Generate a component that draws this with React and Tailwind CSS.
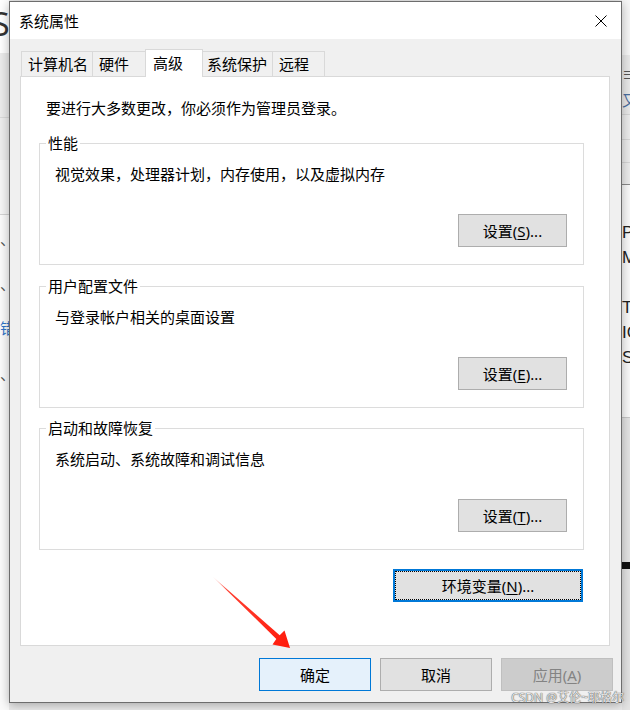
import React from 'react';

const tabs = [
  { label: '计算机名', cls: 'w-[72px] pl-[6px]' },
  { label: '硬件', cls: 'w-[54px] pl-[6px] -ml-px' },
  { label: '高级', active: true, cls: 'w-[58px] pl-[7px] -ml-px' },
  { label: '系统保护', cls: 'w-[71px] pl-[4px] -ml-px' },
  { label: '远程', cls: 'w-[53px] pl-[6px] -ml-px' },
];

const groups = [
  { title: '性能', text: '视觉效果，处理器计划，内存使用，以及虚拟内存', key: 'S', gap: 'mt-[15px]' },
  { title: '用户配置文件', text: '与登录帐户相关的桌面设置', key: 'E', gap: 'mt-[11px]' },
  { title: '启动和故障恢复', text: '系统启动、系统故障和调试信息', key: 'T', gap: 'mt-[10px]' },
];

function SettingsButton({ hotkey }) {
  return (
    <button className="self-end w-[109px] h-[33px] border border-[#adadad] bg-[#e1e1e1] text-[15px] leading-[20px] text-black">
      设置(<span className="underline underline-offset-2">{hotkey}</span>)...
    </button>
  );
}

function Group({ title, text, hotkey, gap }) {
  return (
    <fieldset className={`w-[545px] border border-[#dcdcdc] ${gap}`}>
      <legend className="ml-[6px] px-[2px] leading-[20px] text-[15px]">{title}</legend>
      <div className="h-[111px] flex flex-col justify-between pt-[11px] pb-[17px] pl-[15px] pr-[16px]">
        <div className="leading-[20px] text-[15px]">{text}</div>
        <SettingsButton hotkey={hotkey} />
      </div>
    </fieldset>
  );
}

function LeftStrip() {
  return (
    <div className="w-[9px] h-[710px] overflow-hidden flex flex-col shrink-0">
      <div className="h-[53px] bg-white overflow-hidden">
        <span className="block whitespace-nowrap text-[32px] leading-[32px] -ml-[8px] mt-[8px] text-[#333]">S</span>
      </div>
      <div className="h-[65px] bg-[#ebebeb] border-b border-[#d9d9d9]" />
      <div className="h-[42px] bg-[#ededed]" />
      <div className="h-[55px] bg-[#f6f6f6] border-b border-[#d4d4d4]" />
      <div className="flex-1 bg-[#fbfbfb] text-[15px] leading-[16px] whitespace-nowrap">
        <div className="mt-[16px] text-[#555]">、</div>
        <div className="mt-[29px] text-[#555]">、</div>
        <div className="mt-[28px] text-[#2f73c8]">错</div>
        <div className="mt-[30px] text-[#555]">、</div>
      </div>
    </div>
  );
}

function RightStrip() {
  return (
    <div className="w-[8px] h-[710px] overflow-hidden flex flex-col shrink-0 bg-[#f4f4f4]">
      <div className="h-[55px] bg-[#f7f7f7]" />
      <div className="h-[60px] bg-[#e9e9e9] border-b border-[#d6d6d6] pt-[10px] text-[15px] leading-[18px] whitespace-nowrap">
        <div className="text-[#555]">≡</div>
        <div className="mt-[8px] text-[#4a6fa0]">又</div>
      </div>
      <div className="h-[25px] bg-[#ececec] border-b border-[#d6d6d6]" />
      <div className="h-[23px] bg-[#ececec] border-b border-[#d6d6d6]" />
      <div className="h-[22px] bg-[#ececec] border-b border-[#8a8a8a]" />
      <div className="h-[232px] bg-[#fafafa] pt-[35px] text-[17px] leading-[25px] text-[#222] whitespace-nowrap font-['Liberation_Sans',sans-serif]">
        <div>P</div>
        <div>M</div>
        <div className="mt-[25px]">T</div>
        <div>IC</div>
        <div>S</div>
      </div>
      <div className="flex-1 bg-[#e4e4e4] border-t border-[#c8c8c8] pt-[144px]">
        <div className="h-[7px] bg-[#111]" />
      </div>
    </div>
  );
}

export default function App() {
  return (
    <div className="relative w-[630px] h-[710px] overflow-hidden bg-[#ececec] flex font-['Noto_Sans','Noto_Sans_CJK_SC',sans-serif] text-black">
      <LeftStrip />

      {/* Dialog */}
      <div className="relative z-10 w-[613px] h-[702px] mt-[1px] shrink-0 border border-[#6d6d6d] bg-[#f0f0f0] flex flex-col shadow-[0_2px_10px_rgba(0,0,0,0.3)]">
        {/* Title bar */}
        <div className="h-[37px] bg-white flex items-center justify-between pl-[9px] pr-[14px]">
          <span className="text-[15px] leading-[20px]">系统属性</span>
          <svg width="12" height="12" viewBox="0 0 12 12">
            <path d="M0.5 0.5 L11.5 11.5 M11.5 0.5 L0.5 11.5" stroke="#000" strokeWidth="1" />
          </svg>
        </div>

        <div className="flex-1 flex flex-col pt-[10px]">
          {/* Tabs */}
          <div className="flex items-end h-[27px] pl-[11px]">
            {tabs.map((t) =>
              t.active ? (
                <div
                  key={t.label}
                  className={`relative z-10 h-[28px] -mb-px bg-white border-t border-l border-r border-[#d9d9d9] pt-[3px] text-[15px] leading-[20px] ${t.cls}`}
                >
                  {t.label}
                </div>
              ) : (
                <div
                  key={t.label}
                  className={`h-[25px] bg-[#f0f0f0] border-t border-l border-r border-[#d9d9d9] flex items-center text-[15px] leading-[20px] ${t.cls}`}
                >
                  {t.label}
                </div>
              )
            )}
          </div>

          {/* Panel */}
          <div className="ml-[10px] w-[590px] h-[570px] border border-[#d9d9d9] bg-white pl-[18px] pt-[21px]">
            <div className="pl-[7px] text-[15px] leading-[20px]">要进行大多数更改，你必须作为管理员登录。</div>
            {groups.map((g) => (
              <Group key={g.title} title={g.title} text={g.text} hotkey={g.key} gap={g.gap} />
            ))}
            <div className="w-[545px] flex justify-end pr-[1px] mt-[19px]">
              <button className="w-[190px] h-[33px] border-2 border-[#0078d7] bg-[#e1e1e1] text-[15px] leading-[20px] outline-1 outline-dotted outline-black -outline-offset-3">
                环境变量(<span className="underline underline-offset-2">N</span>)...
              </button>
            </div>
          </div>

          {/* Bottom buttons */}
          <div className="flex justify-end gap-[9px] pr-[8px] mt-[12px]">
            <button className="w-[112px] h-[33px] border border-[#0078d7] bg-[#e5f1fb] text-[15px] leading-[20px]">确定</button>
            <button className="w-[112px] h-[33px] border border-[#adadad] bg-[#e1e1e1] text-[15px] leading-[20px]">取消</button>
            <button className="w-[112px] h-[33px] border border-[#bfbfbf] bg-[#cccccc] text-[15px] leading-[20px] text-[#838383]">
              应用(<span className="underline underline-offset-2">A</span>)
            </button>
          </div>
        </div>
      </div>

      <RightStrip />

      {/* Red annotation arrow */}
      <svg className="absolute inset-0 z-20 pointer-events-none" width="630" height="710" viewBox="0 0 630 710">
        <defs>
          <linearGradient id="arrowFade" x1="212" y1="576" x2="290" y2="648" gradientUnits="userSpaceOnUse">
            <stop offset="0" stopColor="#ff2a1a" stopOpacity="0" />
            <stop offset="0.2" stopColor="#ff2a1a" stopOpacity="0.9" />
            <stop offset="1" stopColor="#ff1a0a" />
          </linearGradient>
        </defs>
        <polygon
          points="212,576 279.7,635.2 284.5,630.5 290,648 272.5,644.5 276.3,638.9"
          fill="url(#arrowFade)"
        />
      </svg>

      {/* Watermark */}
      <div className="absolute z-20 right-[6px] bottom-[5px] text-[12px] leading-[14px] text-[#e6e6e6] [text-shadow:0_0_1px_#555,0_0_1px_#555] font-['Noto_Sans','Noto_Sans_CJK_SC',sans-serif]">
        CSDN @艾伦~耶格尔
      </div>
    </div>
  );
}
